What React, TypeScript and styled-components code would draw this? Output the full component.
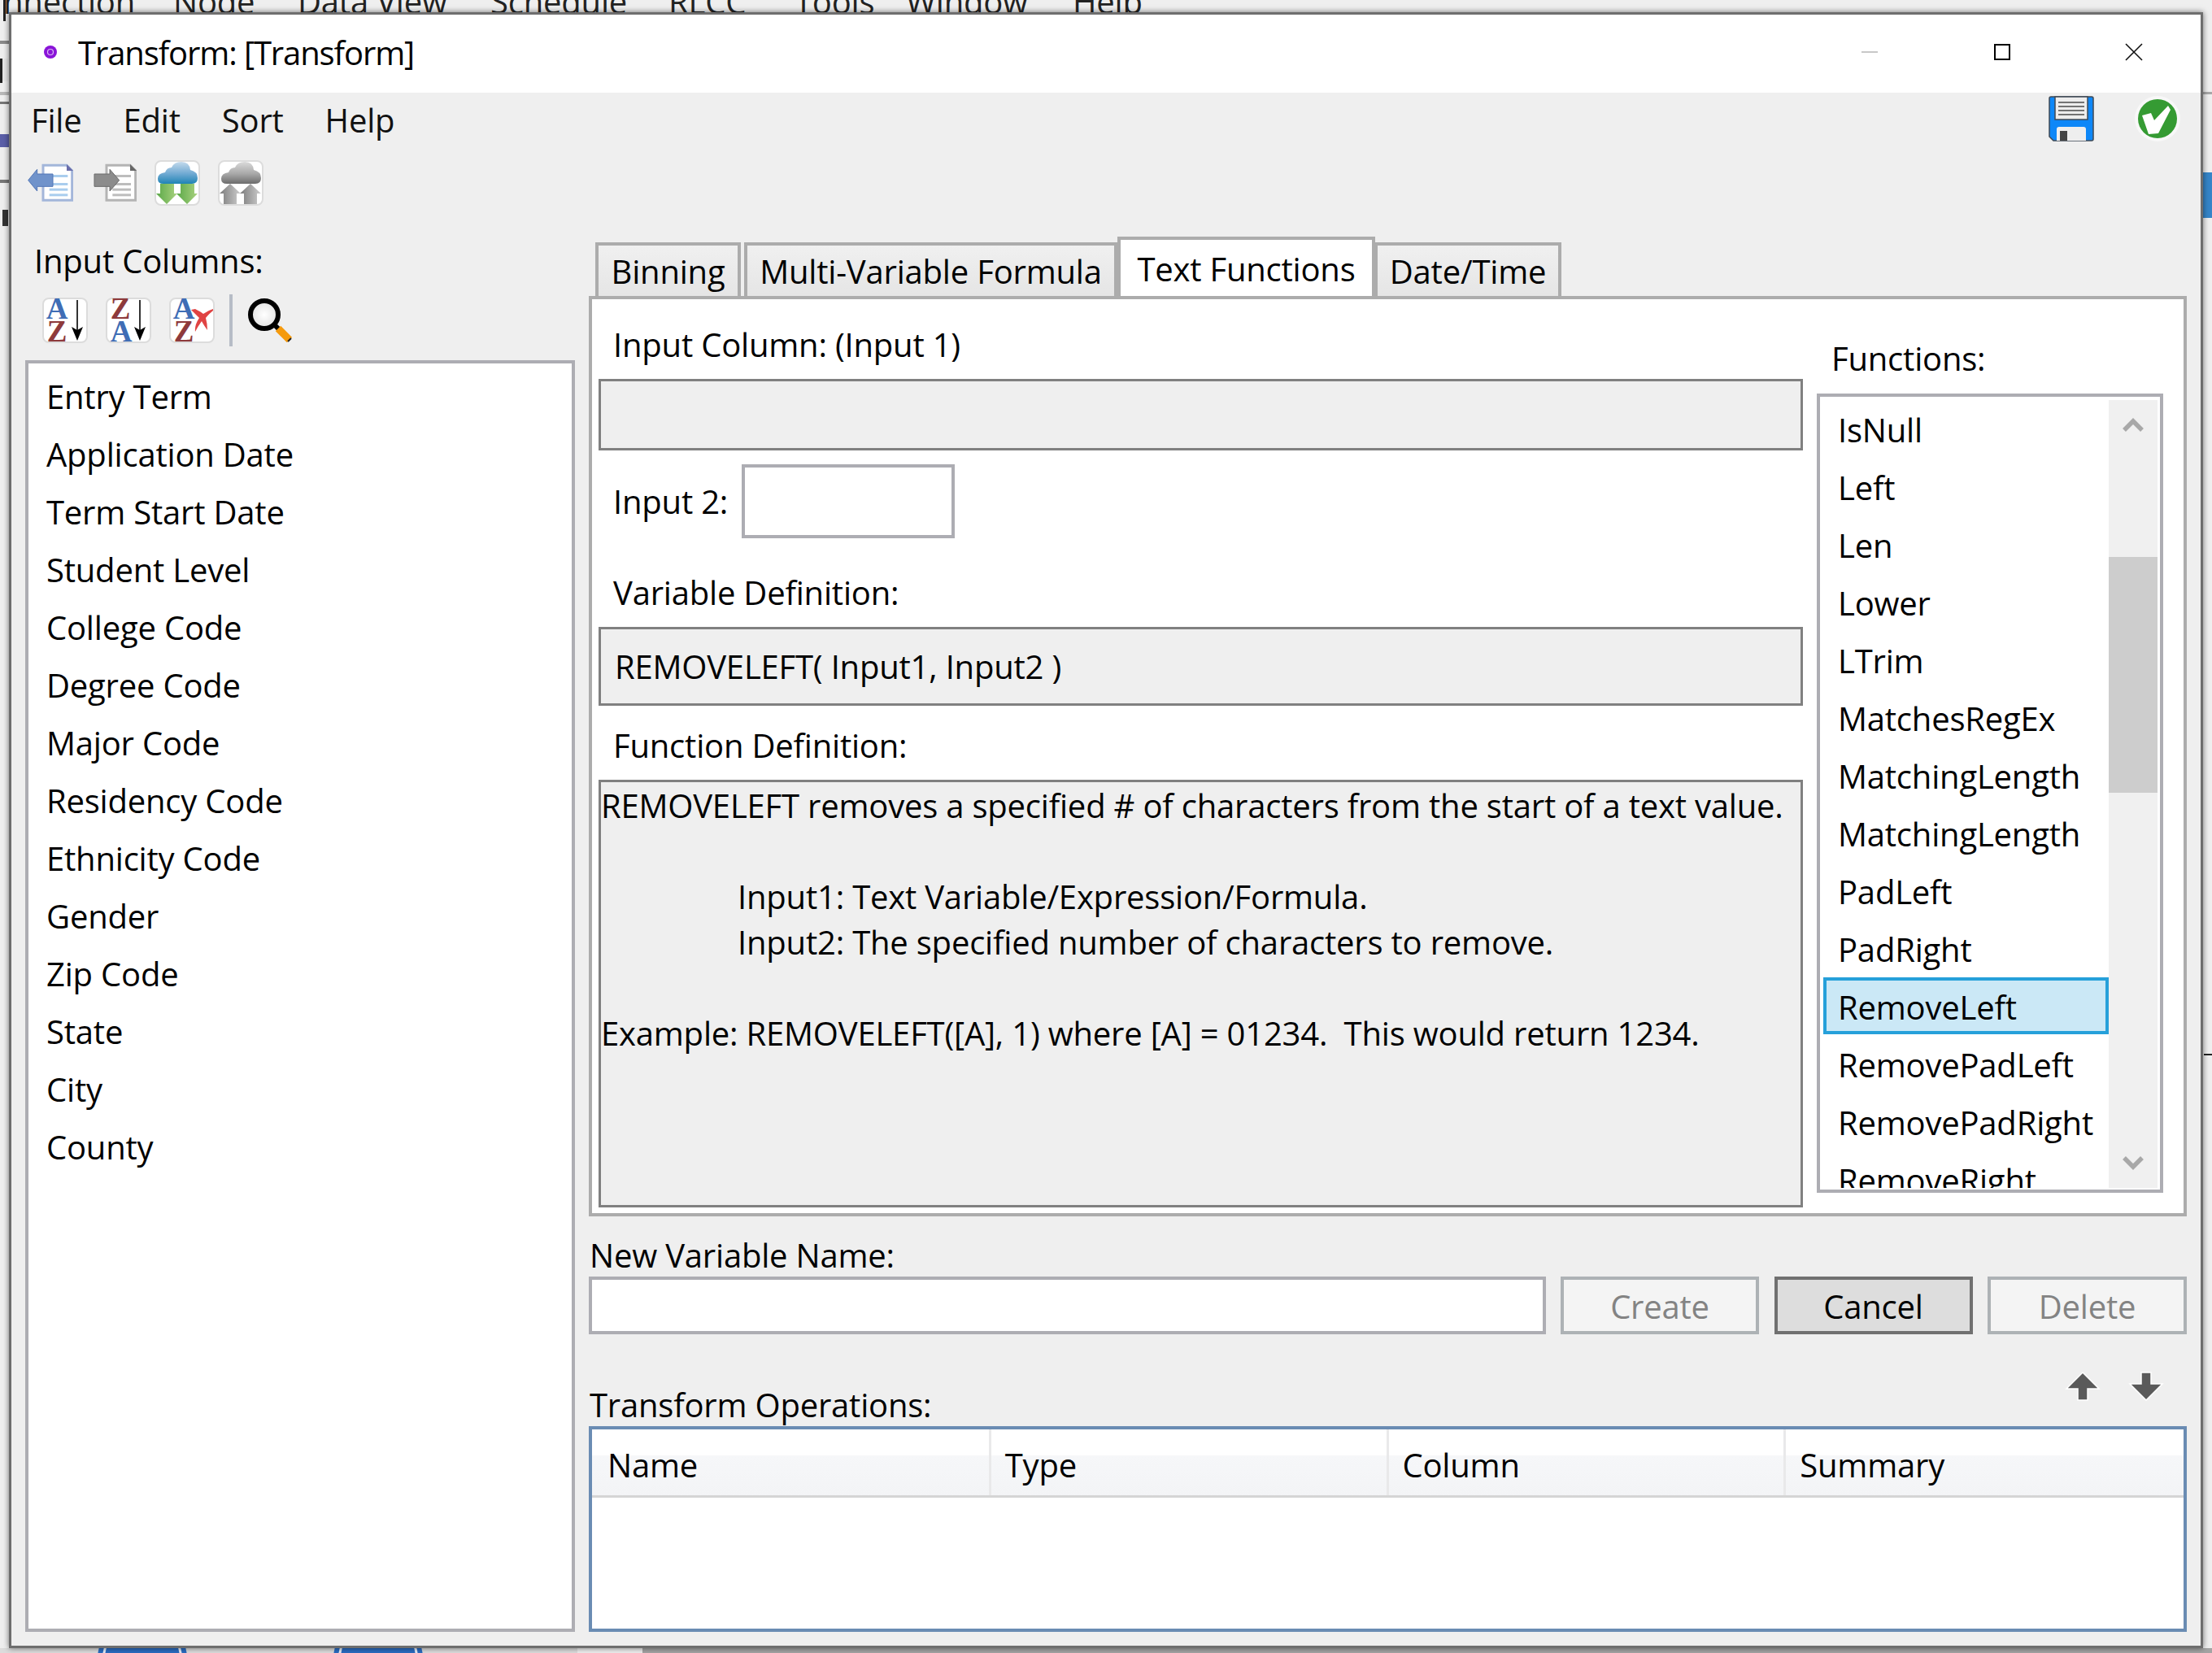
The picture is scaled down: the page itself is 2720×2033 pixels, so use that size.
import React from "react";
import styled, { createGlobalStyle } from "styled-components";

const GlobalStyle = createGlobalStyle`
  html, body {
    margin: 0;
    padding: 0;
    background: #efefef;
    overflow: hidden;
  }
  * {
    box-sizing: border-box;
  }
`;

const Desktop = styled.div`
  position: relative;
  width: 2720px;
  height: 2033px;
  overflow: hidden;
  background: #efefef;
  font-family: "Open Sans", "Noto Sans", sans-serif;
  font-size: 40px;
  letter-spacing: -0.2px;
  color: #000;
`;

/* what shows of the application behind the dialog */
const BehindMenu = styled.div<{ $x: number }>`
  position: absolute;
  left: ${(p) => p.$x}px;
  top: -26px;
  line-height: 56px;
  color: #222;
`;

const BehindBar = styled.div<{ $x: number; $y: number; $w: number; $h: number; $c: string }>`
  position: absolute;
  left: ${(p) => p.$x}px;
  top: ${(p) => p.$y}px;
  width: ${(p) => p.$w}px;
  height: ${(p) => p.$h}px;
  background: ${(p) => p.$c};
`;

const BehindBadge = styled.div<{ $x: number }>`
  position: absolute;
  left: ${(p) => p.$x}px;
  top: 1985px;
  width: 110px;
  height: 110px;
  border-radius: 50%;
  background: #2a6cc2;
  &::after {
    content: "";
    position: absolute;
    inset: 6px;
    border-radius: 50%;
    border: 3px solid #e8eef8;
  }
`;

const Window = styled.div`
  position: absolute;
  left: 11px;
  top: 15px;
  width: 2698px;
  height: 2012px;
  border: 3px solid #6e6e6e;
  background: #efefef;
  box-shadow: 0 0 7px rgba(0, 0, 0, 0.55);
  display: flex;
  flex-direction: column;
`;

const TitleBar = styled.div`
  height: 96px;
  flex: none;
  background: #fff;
  display: flex;
  align-items: center;
  padding-left: 82px;
  position: relative;
`;

const TitleIcon = styled.svg`
  position: absolute;
  left: 40px;
  top: 38px;
  width: 16px;
  height: 16px;
`;

const TitleText = styled.div`
  line-height: 56px;
  margin-top: -3px;
  letter-spacing: -1.1px;
`;

const WindowButtons = styled.div`
  margin-left: auto;
  display: flex;
  align-items: center;
  margin-right: 71px;
  margin-top: -5px;
  gap: 140.5px;
`;

const MenuBar = styled.div`
  height: 83px;
  flex: none;
  display: flex;
  padding: 4px 25px 0 24px;
`;

const MenuItems = styled.div`
  display: flex;
  gap: 51px;
  line-height: 56px;
  margin-top: 2px;
  color: #111;
`;

const MenuIcons = styled.div`
  margin-left: auto;
  display: flex;
  gap: 50px;
`;

const Toolbar = styled.div`
  flex: none;
  display: flex;
  gap: 22px;
  padding-left: 20px;
  height: 56px;
`;

const Main = styled.div`
  flex: 1;
  min-height: 0;
  display: grid;
  grid-template-columns: 676px 1965px;
  gap: 17px;
  padding: 0 17px 17px;
`;

const LeftColumn = styled.div`
  display: flex;
  flex-direction: column;
  min-height: 0;
`;

const InputColumnsLabel = styled.div`
  height: 56px;
  line-height: 59px;
  margin: 38px 0 15px 11px;
`;

const SortBar = styled.div`
  display: flex;
  align-items: center;
  gap: 22px;
  height: 64px;
  margin-left: 21px;
`;

const SortDivider = styled.div`
  width: 4px;
  height: 64px;
  background: #b6bcc6;
  margin: 0 -3px 0 -4px;
`;

const ColumnList = styled.div`
  flex: 1;
  margin-top: 17px;
  border: 4px solid #adadb3;
  background: #fff;
  padding-top: 5px;
`;

const ColumnItem = styled.div`
  height: 71px;
  line-height: 71px;
  padding-left: 22px;
`;

const RightColumn = styled.div`
  display: flex;
  flex-direction: column;
  min-height: 0;
  padding-top: 38px;
`;

const TabRow = styled.div`
  display: flex;
  align-items: flex-end;
  height: 73px;
  padding-left: 8px;
`;

const Tab = styled.div<{ $w: number; $active?: boolean; $mr?: number }>`
  width: ${(p) => p.$w}px;
  height: ${(p) => (p.$active ? 73 : 66)}px;
  margin-right: ${(p) => p.$mr ?? 0}px;
  padding-top: ${(p) => (p.$active ? 8 : 4)}px;
  border: 4px solid #acacac;
  border-bottom: none;
  background: ${(p) => (p.$active ? "#fff" : "linear-gradient(#f0f0f0, #e5e5e5)")};
  text-align: center;
  line-height: 56px;
  white-space: nowrap;
`;

const TabPanel = styled.div`
  height: 1132px;
  flex: none;
  border: 4px solid #acacac;
  background: #fff;
  display: grid;
  grid-template-columns: 1481px 426px;
  gap: 17px;
  padding-left: 8px;
`;

const FormColumn = styled.div`
  display: flex;
  flex-direction: column;
`;

const FieldLabel = styled.div<{ $mt: number }>`
  line-height: 59px;
  height: 56px;
  margin: ${(p) => p.$mt}px 0 16px 18px;
`;

const ReadOnlyBox = styled.div<{ $h: number }>`
  height: ${(p) => p.$h}px;
  border: 3px solid #808080;
  background: #efefef;
  line-height: 56px;
  flex: none;
`;

const VariableBox = styled(ReadOnlyBox)`
  display: flex;
  align-items: center;
  padding: 1px 0 0 17px;
`;

const DefinitionBox = styled(ReadOnlyBox)`
  padding: 1px 0 0 0;
  white-space: pre-wrap;
`;

const DefinitionLine = styled.div<{ $indent?: boolean }>`
  height: 56px;
  padding-left: ${(p) => (p.$indent ? 168 : 0)}px;
`;

const Input2Row = styled.div`
  display: flex;
  align-items: center;
  margin-top: 17px;
  height: 91px;
`;

const Input2Label = styled.div`
  width: 176px;
  padding-left: 18px;
  line-height: 59px;
`;

const TextBox = styled.div<{ $w?: number }>`
  width: ${(p) => (p.$w ? `${p.$w}px` : "auto")};
  height: 100%;
  border: 4px solid #adadb3;
  background: #fff;
`;

const FunctionColumn = styled.div`
  display: flex;
  flex-direction: column;
`;

const FunctionsLabel = styled.div`
  height: 56px;
  line-height: 59px;
  margin: 43px 0 17px 18px;
`;

const FunctionList = styled.div`
  height: 983px;
  border: 4px solid #adadb3;
  background: #fff;
  display: flex;
  padding: 4px 3px 2px 4px;
`;

const FunctionItems = styled.div`
  width: 351px;
  height: 100%;
  overflow: hidden;
`;

const FunctionItem = styled.div<{ $selected?: boolean }>`
  height: 71px;
  line-height: ${(p) => (p.$selected ? 66 : 74)}px;
  padding-left: ${(p) => (p.$selected ? 14 : 18)}px;
  white-space: nowrap;
  ${(p) => (p.$selected ? "background: #cbe8f6; border: 4px solid #26a0da; height: 70px; margin-bottom: 1px;" : "")}
`;

const ScrollTrack = styled.div`
  flex: 1;
  background: #f0f0f0;
  display: flex;
  flex-direction: column;
  align-items: center;
`;

const ScrollButton = styled.div<{ $bottom?: boolean }>`
  height: 62px;
  display: flex;
  align-items: center;
  justify-content: center;
  flex: none;
  margin-top: ${(p) => (p.$bottom ? "auto" : "0")};
`;

const ScrollThumb = styled.div`
  width: 100%;
  height: 290px;
  margin-top: 131px;
  background: #cdcdcd;
`;

const NameLabel = styled.div`
  line-height: 59px;
  height: 56px;
  margin-top: 18px;
  padding-left: 1px;
`;

const NameRow = styled.div`
  display: grid;
  grid-template-columns: 1fr 244px 244px 245px;
  column-gap: 18.5px;
  height: 71px;
`;

const ActionButton = styled.div<{ $disabled?: boolean }>`
  display: flex;
  align-items: center;
  justify-content: center;
  line-height: 56px;
  padding-top: 2px;
  border: ${(p) => (p.$disabled ? "4px solid #adb2b5" : "4px solid #707070")};
  background: ${(p) => (p.$disabled ? "#f4f4f4" : "#dddddd")};
  color: ${(p) => (p.$disabled ? "#838383" : "#000")};
`;

const OperationsHeader = styled.div`
  height: 113px;
  display: flex;
  justify-content: space-between;
  align-items: flex-end;
  padding-left: 1px;
`;

const OperationsLabel = styled.div`
  height: 56px;
  line-height: 59px;
`;

const MoveButtons = styled.div`
  align-self: flex-start;
  display: flex;
  gap: 34px;
  margin: 45px 28px 0 0;
`;

const OperationsTable = styled.div`
  flex: 1;
  border: 4px solid #6a8cb3;
  background: #fff;
`;

const TableHead = styled.div`
  height: 84px;
  display: grid;
  grid-template-columns: repeat(4, 1fr);
  padding-left: 2px;
  border-bottom: 3px solid #d5d5d5;
  background: linear-gradient(#fff 39%, #f6f7f9 40%, #f3f4f6 100%);
`;

const HeadCell = styled.div`
  line-height: 56px;
  padding: 16px 0 0 17px;
  border-right: 3px solid #e9e9ea;
  &:last-child {
    border-right: none;
  }
`;

const WinGlyph = styled.svg`
  width: 22px;
  height: 22px;
  display: block;
`;

const Glyph = styled.svg<{ $size?: number }>`
  width: ${(p) => p.$size ?? 56}px;
  height: ${(p) => p.$size ?? 56}px;
  display: block;
  flex: none;
`;

const ArrowGlyph = styled.svg`
  width: 44px;
  height: 38px;
  display: block;
`;

const SortLetter = ({ x, y, c, t }: { x: number; y: number; c: string; t: string }) => (
  <text
    x={x}
    y={y}
    fill={c}
    fontFamily="'Liberation Serif', serif"
    fontWeight="700"
    fontSize="37"
    textAnchor="middle"
    letterSpacing="0"
  >
    {t}
  </text>
);

const IconBox = () => (
  <rect x="1" y="1" width="54" height="54" rx="7" fill="#fff" stroke="#dcdcdc" strokeWidth="2" />
);

const DownArrow = ({ x }: { x: number }) => (
  <>
    <line x1={x} y1="3" x2={x} y2="42" stroke="#000" strokeWidth="1.6" />
    <path d={`M${x - 7} 36 L${x} 40 L${x + 7} 36 L${x} 53 Z`} fill="#000" />
  </>
);

const SortIcon = ({ kind }: { kind: "az" | "za" | "clear" }) => {
  const blue = "#3f6db5";
  const red = "#8e3a3c";
  return (
    <Glyph viewBox="0 0 56 56">
      <IconBox />
      {kind === "za" ? (
        <>
          <SortLetter x={18} y={26} c={red} t="Z" />
          <SortLetter x={19} y={54} c={blue} t="A" />
          <DownArrow x={42} />
        </>
      ) : (
        <>
          <SortLetter x={18} y={26} c={blue} t="A" />
          <SortLetter x={18} y={54} c={red} t="Z" />
        </>
      )}
      {kind === "az" && <DownArrow x={43} />}
      {kind === "clear" && (
        <path
          d="M27 15 L32 14 Q40 18 42 20 Q48 16 54 14 L54 16 Q49 20 45 25 Q47 32 47 40 Q42 33 40 29 Q35 36 32 42 Q31 34 37 25 Q32 20 27 15 Z"
          fill="#e04343"
        />
      )}
    </Glyph>
  );
};

const SearchIcon = () => (
  <Glyph $size={54} viewBox="0 0 54 54">
    <defs>
      <radialGradient id="lens">
        <stop offset="0" stopColor="#ffffff" />
        <stop offset="1" stopColor="#e2e2e2" />
      </radialGradient>
    </defs>
    <line x1="33" y1="33" x2="40" y2="40" stroke="#000" strokeWidth="6" />
    <line x1="37" y1="37" x2="51" y2="51" stroke="#f59a0c" strokeWidth="9" />
    <line x1="49" y1="53" x2="53" y2="49" stroke="#222" strokeWidth="2" />
    <circle cx="20" cy="20" r="17" fill="url(#lens)" stroke="#000" strokeWidth="6" />
  </Glyph>
);

const DocIcon = ({ out }: { out?: boolean }) => {
  const border = out ? "#b4b4b4" : "#a3b6da";
  const lines = out ? "#bdbdbd" : "#a9cdee";
  const fold = out ? "#666" : "#6a6eab";
  const fill = out ? "#8c8c8c" : "#7093cb";
  const edge = out ? "#6a6a6a" : "#5376b6";
  return out ? (
    <Glyph viewBox="276 291 168 168">
      <path d="M333 310 H420 L440 330 V439 H333 Z" fill="#fff" stroke={border} strokeWidth="9" />
      <path d="M420 306 L444 330 H420 Z" fill={fold} />
      {[345, 375, 395, 415].map((y) => (
        <rect key={y} x="355" y={y} width="68" height="9" fill={lines} />
      ))}
      <path d="M288 342 H345 V325 L380 365 L345 405 V388 H288 Z" fill={fill} stroke={edge} strokeWidth="3" />
    </Glyph>
  ) : (
    <Glyph viewBox="42 291 168 168">
      <path d="M99 310 H186 L206 330 V439 H99 Z" fill="#fff" stroke={border} strokeWidth="9" />
      <path d="M186 306 L210 330 H186 Z" fill={fold} />
      {[345, 375, 395, 415].map((y) => (
        <rect key={y} x="122" y={y} width="68" height="9" fill={lines} />
      ))}
      <path d="M135 342 H77 V325 L44 365 L77 405 V388 H135 Z" fill={fill} stroke={edge} strokeWidth="3" />
    </Glyph>
  );
};

const CLOUD = "M11 29 Q4 29 4 23 Q4 16 13 15 Q15 9 21 9 Q24 2 33 2 Q43 2 44 12 Q53 14 53 22 Q53 29 46 29 Z";

const CloudDownIcon = () => (
  <Glyph viewBox="0 0 56 56">
    <defs>
      <linearGradient id="cloudBlue" x1="0" y1="0" x2="0" y2="1">
        <stop offset="0" stopColor="#c4daec" />
        <stop offset="0.55" stopColor="#6fa9d2" />
        <stop offset="1" stopColor="#1f84b5" />
      </linearGradient>
      <linearGradient id="arrowGreen" x1="0" y1="0" x2="1" y2="0">
        <stop offset="0" stopColor="#5ba848" />
        <stop offset="1" stopColor="#a9d27f" />
      </linearGradient>
    </defs>
    <IconBox />
    <path d="M7 29 H24 V41 H28 L15 54 L2 41 H7 Z" fill="url(#arrowGreen)" />
    <path d="M32 29 H49 V41 H53 L40 54 L27 41 H32 Z" fill="url(#arrowGreen)" />
    <path d={CLOUD} fill="url(#cloudBlue)" />
  </Glyph>
);

const CloudUpIcon = () => (
  <Glyph viewBox="0 0 56 56">
    <defs>
      <linearGradient id="cloudGray" x1="0" y1="0" x2="0" y2="1">
        <stop offset="0" stopColor="#dadada" />
        <stop offset="0.55" stopColor="#a8a8a8" />
        <stop offset="1" stopColor="#6c6c6c" />
      </linearGradient>
      <linearGradient id="arrowGray" x1="0" y1="0" x2="1" y2="0">
        <stop offset="0" stopColor="#7c7c7c" />
        <stop offset="1" stopColor="#cecece" />
      </linearGradient>
    </defs>
    <IconBox />
    <path d="M7 54 H23 V41 H28 L15 29 L2 41 H7 Z" fill="url(#arrowGray)" />
    <path d="M32 54 H48 V41 H53 L40 29 L27 41 H32 Z" fill="url(#arrowGray)" />
    <path d={CLOUD} fill="url(#cloudGray)" />
  </Glyph>
);

const SaveIcon = () => (
  <Glyph viewBox="0 0 56 56">
    <path d="M3 1 H53 Q55 1 55 3 V53 Q55 55 53 55 H6 L1 50 V3 Q1 1 3 1 Z" fill="#0d87f8" stroke="#3f4a55" strokeWidth="1.5" />
    <rect x="8" y="1" width="40" height="28" fill="#ededed" stroke="#3f4a55" strokeWidth="1.5" />
    {[7, 12, 17, 22].map((y) => (
      <rect key={y} x="12" y={y} width="32" height="1.8" fill="#666" />
    ))}
    <path d="M10 55 V41 Q10 38 13 38 H43 Q46 38 46 41 V55 Z" fill="#eeeeee" />
    <rect x="14" y="43" width="9" height="12" fill="#444" />
  </Glyph>
);

const CheckIcon = () => (
  <Glyph viewBox="0 0 56 56">
    <circle cx="28" cy="28" r="28" fill="#f8f8f8" />
    <circle cx="28" cy="28" r="24" fill="#359b33" />
    <path d="M9 24 L20 21 L24 30 L41 12 L44 17 L29 46 L17 47 Z" fill="#fff" />
  </Glyph>
);

const Chevron = ({ up }: { up?: boolean }) => (
  <Glyph $size={28} viewBox="0 0 28 28">
    <polyline
      points={up ? "3,20 14,9 25,20" : "3,8 14,19 25,8"}
      fill="none"
      stroke="#a8a8a8"
      strokeWidth="5.5"
    />
  </Glyph>
);

const ColumnNames = [
  "Entry Term",
  "Application Date",
  "Term Start Date",
  "Student Level",
  "College Code",
  "Degree Code",
  "Major Code",
  "Residency Code",
  "Ethnicity Code",
  "Gender",
  "Zip Code",
  "State",
  "City",
  "County",
];

const FunctionNames = [
  "IsNull",
  "Left",
  "Len",
  "Lower",
  "LTrim",
  "MatchesRegEx",
  "MatchingLength",
  "MatchingLength",
  "PadLeft",
  "PadRight",
  "RemoveLeft",
  "RemovePadLeft",
  "RemovePadRight",
  "RemoveRight",
];

const BehindLabels: [string, number][] = [
  ["nnection", 4],
  ["Node", 213],
  ["Data View", 366],
  ["Schedule", 603],
  ["RLCC", 822],
  ["Tools", 977],
  ["Window", 1114],
  ["Help", 1319],
];

const App = () => {
  return (
    <Desktop>
      <GlobalStyle />
      {BehindLabels.map(([label, x]) => (
        <BehindMenu key={label} $x={x}>
          {label}
        </BehindMenu>
      ))}
      <BehindBar $x={4} $y={0} $w={3} $h={26} $c="#222" />
      <BehindBar $x={0} $y={50} $w={11} $h={4} $c="#8a8a8a" />
      <BehindBar $x={0} $y={72} $w={10} $h={28} $c="#e8e8e8" />
      <BehindBar $x={0} $y={72} $w={3} $h={30} $c="#222" />
      <BehindBar $x={0} $y={113} $w={11} $h={4} $c="#b8b8b8" />
      <BehindBar $x={0} $y={125} $w={11} $h={3} $c="#777" />
      <BehindBar $x={0} $y={165} $w={11} $h={16} $c="#5b5fa8" />
      <BehindBar $x={0} $y={221} $w={11} $h={4} $c="#777" />
      <BehindBar $x={3} $y={258} $w={7} $h={20} $c="#333" />
      <BehindBar $x={2709} $y={113} $w={11} $h={3} $c="#a8a8a8" />
      <BehindBar $x={2709} $y={212} $w={11} $h={56} $c="#3585c8" />
      <BehindBar $x={2710} $y={1296} $w={10} $h={2} $c="#222" />
      <BehindBar $x={0} $y={2027} $w={710} $h={6} $c="#dcdcdc" />
      <BehindBar $x={790} $y={2027} $w={1930} $h={6} $c="#a4a4a4" />
      <BehindBadge $x={120} />
      <BehindBadge $x={410} />

      <Window>
        <TitleBar>
          <TitleIcon viewBox="0 0 16 16">
            <circle cx="8" cy="8" r="8" fill="#8a14d8" />
            <circle cx="8" cy="8" r="3.5" fill="none" stroke="#d9b8f4" strokeWidth="1.2" />
          </TitleIcon>
          <TitleText>Transform: [Transform]</TitleText>
          <WindowButtons>
            <WinGlyph viewBox="0 0 22 22">
              <rect x="1" y="10" width="20" height="2" fill="#c8c8c8" />
            </WinGlyph>
            <WinGlyph viewBox="0 0 22 22">
              <rect x="2" y="2" width="18" height="18" fill="none" stroke="#000" strokeWidth="2" />
            </WinGlyph>
            <WinGlyph viewBox="0 0 22 22">
              <path d="M1 1 L21 21 M21 1 L1 21" stroke="#111" strokeWidth="1.6" fill="none" />
            </WinGlyph>
          </WindowButtons>
        </TitleBar>

        <MenuBar>
          <MenuItems>
            <span>File</span>
            <span>Edit</span>
            <span>Sort</span>
            <span>Help</span>
          </MenuItems>
          <MenuIcons>
            <SaveIcon />
            <CheckIcon />
          </MenuIcons>
        </MenuBar>

        <Toolbar>
          <DocIcon />
          <DocIcon out />
          <CloudDownIcon />
          <CloudUpIcon />
        </Toolbar>

        <Main>
          <LeftColumn>
            <InputColumnsLabel>Input Columns:</InputColumnsLabel>
            <SortBar>
              <SortIcon kind="az" />
              <SortIcon kind="za" />
              <SortIcon kind="clear" />
              <SortDivider />
              <SearchIcon />
            </SortBar>
            <ColumnList>
              {ColumnNames.map((name) => (
                <ColumnItem key={name}>{name}</ColumnItem>
              ))}
            </ColumnList>
          </LeftColumn>

          <RightColumn>
            <TabRow>
              <Tab $w={179} $mr={4}>Binning</Tab>
              <Tab $w={459}>Multi-Variable Formula</Tab>
              <Tab $w={317} $mr={-1} $active>Text Functions</Tab>
              <Tab $w={230}>Date/Time</Tab>
            </TabRow>

            <TabPanel>
              <FormColumn>
                <FieldLabel $mt={26}>Input Column: (Input 1)</FieldLabel>
                <ReadOnlyBox $h={88} />
                <Input2Row>
                  <Input2Label>Input 2:</Input2Label>
                  <TextBox $w={262} />
                </Input2Row>
                <FieldLabel $mt={37}>Variable Definition:</FieldLabel>
                <VariableBox $h={97}>REMOVELEFT( Input1, Input2 )</VariableBox>
                <FieldLabel $mt={19}>Function Definition:</FieldLabel>
                <DefinitionBox $h={526}>
                  <DefinitionLine>REMOVELEFT removes a specified # of characters from the start of a text value.</DefinitionLine>
                  <DefinitionLine />
                  <DefinitionLine $indent>Input1: Text Variable/Expression/Formula.</DefinitionLine>
                  <DefinitionLine $indent>Input2: The specified number of characters to remove.</DefinitionLine>
                  <DefinitionLine />
                  <DefinitionLine>{"Example: REMOVELEFT([A], 1) where [A] = 01234.  This would return 1234."}</DefinitionLine>
                </DefinitionBox>
              </FormColumn>

              <FunctionColumn>
                <FunctionsLabel>Functions:</FunctionsLabel>
                <FunctionList>
                  <FunctionItems>
                    {FunctionNames.map((name, i) => (
                      <FunctionItem key={`${name}-${i}`} $selected={name === "RemoveLeft"}>
                        {name}
                      </FunctionItem>
                    ))}
                  </FunctionItems>
                  <ScrollTrack>
                    <ScrollButton>
                      <Chevron up />
                    </ScrollButton>
                    <ScrollThumb />
                    <ScrollButton $bottom>
                      <Chevron />
                    </ScrollButton>
                  </ScrollTrack>
                </FunctionList>
              </FunctionColumn>
            </TabPanel>

            <NameLabel>New Variable Name:</NameLabel>
            <NameRow>
              <TextBox />
              <ActionButton $disabled>Create</ActionButton>
              <ActionButton>Cancel</ActionButton>
              <ActionButton $disabled>Delete</ActionButton>
            </NameRow>

            <OperationsHeader>
              <OperationsLabel>Transform Operations:</OperationsLabel>
              <MoveButtons>
                <ArrowGlyph viewBox="0 0 44 38">
                  <path d="M22 2 L42 22 H28 V36 H16 V22 H2 Z" fill="#5a5a5a" stroke="#fff" strokeWidth="1.5" />
                </ArrowGlyph>
                <ArrowGlyph viewBox="0 0 44 38">
                  <path d="M16 2 H28 V16 H42 L22 36 L2 16 H16 Z" fill="#5a5a5a" stroke="#fff" strokeWidth="1.5" />
                </ArrowGlyph>
              </MoveButtons>
            </OperationsHeader>

            <OperationsTable>
              <TableHead>
                <HeadCell>Name</HeadCell>
                <HeadCell>Type</HeadCell>
                <HeadCell>Column</HeadCell>
                <HeadCell>Summary</HeadCell>
              </TableHead>
            </OperationsTable>
          </RightColumn>
        </Main>
      </Window>
    </Desktop>
  );
};

export default App;
